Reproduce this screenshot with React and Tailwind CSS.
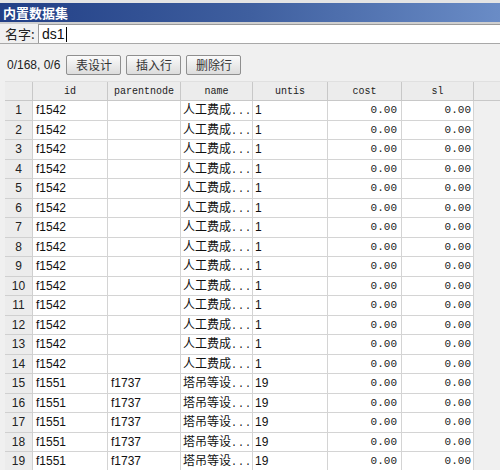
import React from "react";

const rows = [];
for (let i = 1; i <= 19; i++) {
  if (i <= 14) rows.push({ n: i, id: "f1542", p: "", name: "人工费成", u: "1" });
  else rows.push({ n: i, id: "f1551", p: "f1737", name: "塔吊等设", u: "19" });
}

const cols = [
  { k: "id", w: "w-[75px]" },
  { k: "parentnode", w: "w-[73px]" },
  { k: "name", w: "w-[72px]" },
  { k: "untis", w: "w-[75px]" },
  { k: "cost", w: "w-[74px]" },
  { k: "sl", w: "w-[72px]" },
];

function Btn({ children }) {
  return (
    <div className="h-[20px] w-[55px] flex items-center justify-center border border-[#8f8f8f] rounded-[2px] bg-gradient-to-b from-[#fbfbfb] to-[#dcdcdc] text-[12px] text-[#333] [font-family:'Noto_Sans_CJK_SC',sans-serif]">
      {children}
    </div>
  );
}

export default function App() {
  const sans = "[font-family:'Liberation_Sans','Noto_Sans_CJK_SC',sans-serif]";
  const mono = "[font-family:'Liberation_Mono',monospace]";
  return (
    <div className={`w-[500px] h-[470px] overflow-hidden bg-[#f0f0f0] ${sans}`}>
      <div className="h-[3px] bg-[#e4e4e4]" />
      <div className="h-[19px] flex items-center pl-[3px] bg-gradient-to-r from-[#223f86] via-[#3f5f9f] to-[#6a8cc6] text-white font-bold text-[13px] [font-family:'Noto_Sans_CJK_SC',sans-serif] leading-none">
        内置数据集
      </div>
      <div className="h-[2px] bg-[#cfcfcf]" />
      <div className="h-[19px] flex items-center bg-[#f0f0f0]">
        <span className="pl-[5px] w-[38px] text-[13px] text-[#222] [font-family:'Noto_Sans_CJK_SC',sans-serif] leading-none">名字:</span>
        <div className="flex-1 h-full bg-white border-l border-t border-[#9a9a9a] flex items-center pl-[3px] text-[14px] text-[#111] leading-none">
          ds1<span className="inline-block w-[1px] h-[15px] bg-black ml-[1px]" />
        </div>
      </div>
      <div className="h-[1px] bg-[#a8a8a8]" />
      <div className="h-[37px] flex items-center gap-[5px] pl-[7px] pt-[4px]">
        <span className="text-[12px] text-[#222] mr-[1px] leading-none">0/168, 0/6</span>
        <Btn>表设计</Btn>
        <Btn>插入行</Btn>
        <Btn>删除行</Btn>
      </div>
      <div className="pl-[5px]">
        <div className="flex h-[20px] bg-[#ececec] border-b border-[#c8c8c8] border-t border-t-[#e0e0e0]">
          <div className="w-[28px] border-r border-[#c8c8c8] shrink-0" />
          {cols.map((c) => (
            <div key={c.k} className={`${c.w} shrink-0 border-r border-[#c8c8c8] flex items-center justify-center text-[10px] text-[#222] ${mono}`}>
              {c.k}
            </div>
          ))}
          <div className="flex-1" />
        </div>
        {rows.map((r) => (
          <div key={r.n} className="flex h-[19.5px]">
            <div className="w-[28px] shrink-0 bg-[#ececec] border-r border-b border-[#d0d0d0] flex items-center justify-center text-[12px] text-[#222]">
              {r.n}
            </div>
            <div className="flex bg-white shrink-0">
              <div className="w-[75px] border-r border-b border-[#d4d4d4] flex items-center pl-[3px] text-[12px] text-[#111]">{r.id}</div>
              <div className="w-[73px] border-r border-b border-[#d4d4d4] flex items-center pl-[3px] text-[12px] text-[#111]">{r.p}</div>
              <div className="w-[72px] border-r border-b border-[#d4d4d4] flex items-center pl-[2px] text-[12px] text-[#111] overflow-hidden">
                <span className="whitespace-nowrap leading-none">
                  <span className="[font-family:'Noto_Sans_CJK_SC',sans-serif]">{r.name}</span>
                  <span className={`${mono} text-[10px] tracking-[1px]`}>...</span>
                </span>
              </div>
              <div className="w-[75px] border-r border-b border-[#d4d4d4] flex items-center pl-[2px] text-[12px] text-[#111]">{r.u}</div>
              <div className={`w-[74px] border-r border-b border-[#d4d4d4] flex items-center justify-end pr-[4px] text-[11px] text-[#222] ${mono}`}>0.00</div>
              <div className={`w-[72px] border-r border-b border-[#d4d4d4] flex items-center justify-end pr-[2px] text-[11px] text-[#222] ${mono}`}>0.00</div>
            </div>
            <div className="flex-1" />
          </div>
        ))}
      </div>
    </div>
  );
}
